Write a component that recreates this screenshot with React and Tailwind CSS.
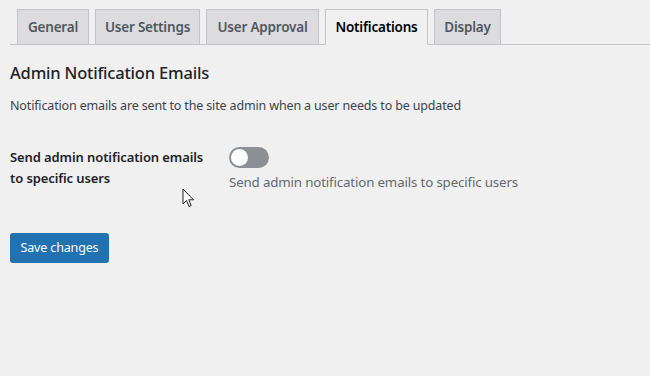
import { useState } from "react";

const tabs = [
  { name: "General", w: "w-[72px]" },
  { name: "User Settings", w: "w-[105px]" },
  { name: "User Approval", w: "w-[113px]" },
  { name: "Notifications", w: "w-[103px]", active: true },
  { name: "Display", w: "w-[67px]" },
];

export default function App() {
  const [enabled, setEnabled] = useState(false);

  return (
    <div className="relative w-[650px] h-[376px] overflow-hidden bg-[#f0f0f1] font-['Noto_Sans',sans-serif] text-[#1d2327]">
      {/* tabs */}
      <div className="flex items-end gap-[6px] mt-[9px] ml-[10px] pl-[7px] border-b border-[#c3c4c7] h-[36px]">
        {tabs.map((t) => (
          <div
            key={t.name}
            className={`${t.w} h-[36px] -mb-px flex items-center justify-center border border-[#c3c4c7] text-[13.5px] font-semibold tracking-[-0.2px] ${
              t.active
                ? "bg-[#f0f0f1] border-b-[#f0f0f1] text-black"
                : "bg-[#dcdcde] text-[#50575e]"
            }`}
          >
            {t.name}
          </div>
        ))}
      </div>

      <div className="px-[10px]">
        <h2 className="mt-[16px] text-[16.5px] font-medium leading-[24px] tracking-[-0.2px] text-[#1d2327]">
          Admin Notification Emails
        </h2>
        <p className="mt-[11px] text-[12.5px] leading-[20px] tracking-[-0.15px] text-[#3c434a]">
          Notification emails are sent to the site admin when a user needs to be updated
        </p>

        <div className="flex mt-[31px]">
          <div className="w-[219px] text-[13px] font-semibold leading-[21px] tracking-[-0.1px] text-[#1d2327]">
            Send admin notification emails
            <br />
            to specific users
          </div>
          <div className="flex flex-col">
            <button
              onClick={() => setEnabled(!enabled)}
              className={`relative w-[40px] h-[21px] rounded-full ${
                enabled ? "bg-[#2271b1]" : "bg-[#8c8f94]"
              }`}
            >
              <span
                className={`absolute top-[2px] w-[17px] h-[17px] rounded-full bg-white ${
                  enabled ? "left-[21px]" : "left-[2px]"
                }`}
              ></span>
            </button>
            <span className="mt-[4px] text-[13.3px] leading-[20px] tracking-[-0.15px] text-[#646970]">
              Send admin notification emails to specific users
            </span>
          </div>
        </div>

        <button className="mt-[41px] w-[99px] h-[30px] rounded-[3px] bg-[#2271b1] text-white text-[12.5px] tracking-[-0.15px]">
          Save changes
        </button>
      </div>

      {/* mouse pointer */}
      <svg
        className="absolute left-[182px] top-[188px]"
        width="13"
        height="20"
        viewBox="0 0 13 20"
      >
        <path
          d="M1 1 L1 16 L4.5 12.5 L7 18.5 L9.2 17.6 L6.8 11.8 L11.5 11.8 Z"
          fill="white"
          stroke="#222"
          strokeWidth="1"
          strokeLinejoin="round"
        />
      </svg>
    </div>
  );
}
